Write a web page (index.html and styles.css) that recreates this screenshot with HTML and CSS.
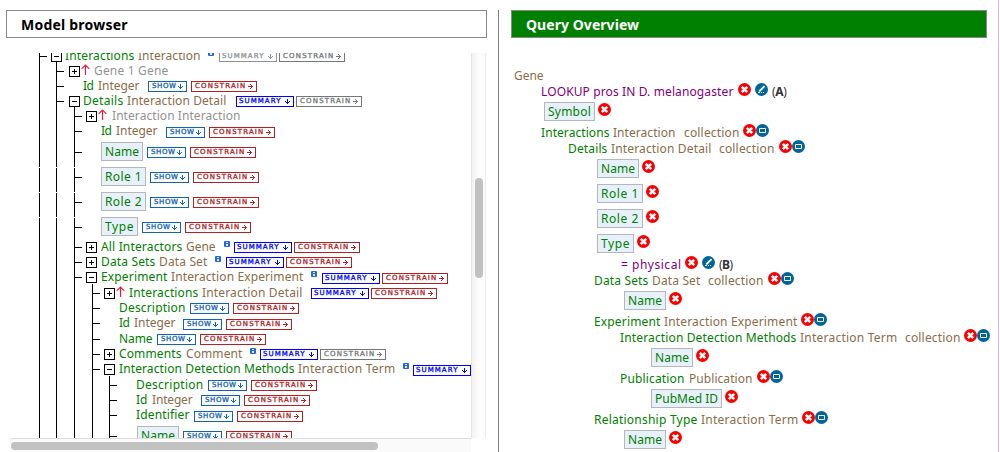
FILE: index.html
```html
<!DOCTYPE html>
<html lang="en">
<head>
<meta charset="utf-8">
<title>Query builder</title>
<link rel="stylesheet" href="styles.css">
</head>
<body>
<svg class="defs" aria-hidden="true">
  <symbol id="remove" viewBox="0 0 13 13"><circle cx="6.5" cy="6.5" r="6.5" fill="#fa0000"/><path d="M3.8 3.8l5.4 5.4M9.2 3.8l-5.4 5.4" stroke="#fff" stroke-width="2.5"/></symbol>
  <symbol id="edit" viewBox="0 0 13 13"><circle cx="6.5" cy="6.5" r="6.5" fill="#00659c"/><path d="M9.5 3.2L4.3 8.4" stroke="#fff" stroke-width="1.9"/><path d="M3 9.5h2M6 9.5h1M8 9.5h1" stroke="#fff"/></symbol>
  <symbol id="join" viewBox="0 0 13 13"><circle cx="6.5" cy="6.5" r="6.5" fill="#00659c"/><path d="M3.5 4.5h6v4h-6z" fill="none" stroke="#fff"/></symbol>
  <symbol id="up" viewBox="0 0 9 11"><path d="M4.5 11V1M.7 4.8L4.5 1l3.8 3.8" fill="none" stroke="#ff1030" stroke-width="1.1"/></symbol>
  <symbol id="info" viewBox="0 0 6 6"><rect width="6" height="6" rx="1" fill="#2468dc"/><path d="M2 1h2v1H2zM2 3h2v2H2z" fill="#fff" opacity=".85"/></symbol>
  <symbol id="down" viewBox="0 0 5 5"><path d="M2 0h1v5H2zM0 2h1v1H0zM4 2h1v1H4zM1 3h3v1H1z" fill="currentColor"/></symbol>
  <symbol id="right" viewBox="0 0 5 5"><path d="M0 2h5v1H0zM2 0h1v1H2zM2 4h1v1H2zM3 1h1v3H3z" fill="currentColor"/></symbol>
</svg>
<main class="page">
  <section class="model">
    <h2 class="title">Model browser</h2>
    <div class="viewer">
      <div class="tree" id="tree"></div>
      <div class="vbar"><div class="vthumb"></div></div>
      <div class="hbar"><div class="hthumb"></div></div>
    </div>
  </section>
  <section class="query">
    <h2 class="title title-green">Query Overview</h2>
    <div class="overview" id="overview"></div>
  </section>
</main>
<script src="app.js"></script>
</body>
</html>
```

FILE: styles.css
```css
body { margin: 0; background: #fff; font: 12px "Noto Sans", "Open Sans", sans-serif; overflow: hidden; }
.defs { display: none; }
.page { display: flex; height: 452px; box-sizing: border-box; padding-top: 10px; position: relative; }
.page::after { content: ""; position: absolute; top: 0; bottom: 0; left: 998px; width: 1px; background: #d3b9ea; }
.model { width: 498px; flex: none; box-sizing: border-box; padding-left: 6px; }
.query { width: 500px; flex: none; border-left: 1px solid #808080; box-sizing: border-box; padding-left: 12px; }
.title { margin: 0; box-sizing: border-box; height: 28px; width: 481px; border: 1px solid #888; padding-left: 14px; line-height: 27px; font-size: 14px; font-weight: bold; letter-spacing: .22px; color: #000; white-space: nowrap; }
.title-green { width: 476px; background: #008000; color: #fff; letter-spacing: .05px; }

.viewer { margin: 15px 0 0 4px; display: grid; grid-template: 385px 14px / 461px 15px; }
.tree { overflow: hidden; }
.vbar { box-sizing: border-box; border-left: 1px solid #e4e4e4; border-right: 1px solid #ececec; background: linear-gradient(90deg, #f2f2f2, #fefefe 60%, #fafafa); padding: 125px 0 0 3px; }
.vthumb { width: 8px; height: 100px; border-radius: 4px; background: #c1c1c1; }
.hbar { box-sizing: border-box; border-top: 1px solid #dedede; background: #fafafa; padding: 3px 0 0 1px; }
.hthumb { width: 367px; height: 8px; border-radius: 4px; background: #c1c1c1; }

.branch { list-style: none; margin: 0; padding: 0; border-left: 1px solid #000; position: relative; }
.tree > .branch { margin: -4px 0 0 29px; }
.branch .branch { margin-left: 17px; }
.branch .branch.near { margin-left: 16px; }
.branch .branch { padding-top: 2px; margin-top: -2px; }
.node { display: flex; align-items: flex-start; height: 15px; position: relative; width: 700px; }
.node.tall { height: 16px; }
.node.field { height: 25px; }
.node.last { height: 26px; }
.node.cut::after { content: ""; position: absolute; left: -40px; top: 3px; width: 45px; height: 1px; background: #fff; }
.tick { width: 7px; height: 1px; background: #000; margin-top: 7px; flex: none; }
.field > .tick { margin-top: 13px; }
.toggle { width: 11px; height: 11px; box-sizing: border-box; border: 1px solid #000; margin-top: 2px; flex: none; background: linear-gradient(#000, #000) center / 5px 1px no-repeat; }
.toggle.plus { background: linear-gradient(#000, #000) center / 5px 1px no-repeat, linear-gradient(#000, #000) center / 1px 5px no-repeat; }
.text { flex: none; white-space: pre; line-height: 14px; }
.green { color: #008000; }
.brown { color: #8b6c4a; }
.gray { color: #929292; }
.purple { color: #800080; }
.dark { color: #333; }
.chip { flex: none; box-sizing: border-box; height: 19px; border: 1px solid #b5b8bb; background: #e8f1fb; color: #008000; line-height: 17px; padding-left: 3px; white-space: pre; margin-top: 3px; }
.tag { flex: none; box-sizing: border-box; height: 11px; margin-top: 2px; border: 1px solid; background: #fcfeff; display: flex; align-items: center; justify-content: space-between; padding: 0 3px 0 3px; font: 7px/9px "DejaVu Sans", sans-serif; white-space: nowrap; }
.tag .label { -webkit-text-stroke: .3px currentColor; }
.field > .tag { margin-top: 8px; }
.tag.low { margin-top: 3px; }
.tag svg { width: 5px; height: 5px; flex: none; }
.show { color: #1464b4; width: 39px; }
.summary { color: #00f; width: 58px; padding-left: 2px; }
.constrain { color: #b22222; width: 66px; }
.off { color: #777; }
.faint { color: #939393; }
.arrow { width: 9px; height: 11px; flex: none; }
.info { width: 6px; height: 6px; margin-top: 1px; flex: none; }

.overview { margin-top: 30px; }
.line { display: flex; align-items: flex-start; height: 16px; }
.line .text { line-height: 15px; }
.line.field { height: 25px; }
.line .chip { margin-top: 2px; }
.icon { width: 13px; height: 13px; flex: none; margin-top: -1px; }
.field > .icon { margin-top: 3px; }
```

FILE: app.js
```js
const ctx = document.createElement('canvas').getContext('2d');

// Letter spacing that makes a text fill the given width.
function fit(el, text, width, font) {
  ctx.font = font;
  el.style.letterSpacing = ((width - ctx.measureText(text).width) / text.length).toFixed(3) + 'px';
}

function svg(id, cls) {
  const t = document.createElement('template');
  t.innerHTML = `<svg class="${cls}"><use href="#${id}"/></svg>`;
  return t.content.firstChild;
}

function div(cls, tag = 'span') {
  const e = document.createElement(tag);
  e.className = cls;
  return e;
}

const TAGS = {
  show: ['SHOW', 39, 24.5, 'down'],
  summary: ['SUMMARY', 58, 42.5, 'down'],
  constrain: ['CONSTRAIN', 66, 51.5, 'right'],
};
const SIZES = { arrow: 9, info: 6, remove: 13, edit: 13, join: 13 };

// Adds the items [kind, start, end, text] to a row whose content begins at x.
function fill(row, items, x) {
  for (const [kind, start, end, text] of items) {
    const name = kind.split(' ')[0];
    let el, width;
    if (TAGS[name]) {
      const [label, w, tw, dir] = TAGS[name];
      width = w;
      el = div('tag ' + kind);
      const s = div('label');
      s.textContent = label;
      s.style.width = tw + 'px';
      fit(s, label, tw, '7px "DejaVu Sans"');
      el.append(s, svg(dir, 'dir'));
    } else if (SIZES[name]) {
      width = SIZES[name];
      el = name === 'arrow' ? svg('up', 'arrow') : svg(name, name === 'info' ? 'info' : 'icon');
    } else {
      width = end - start;
      el = div(name === 'chip' ? 'chip' : 'text ' + kind);
      el.textContent = text;
      el.style.width = width + 'px';
      const bold = /bold/.test(kind);
      if (bold) el.innerHTML = text.replace(/\w/, '<b>$&</b>');
      fit(el, text, name === 'chip' ? width - 8 : width + 0.5, (bold ? 'bold ' : '') + '12px "Noto Sans"');
    }
    el.style.marginLeft = start - x + 'px';
    row.append(el);
    x = start + width;
  }
}

const show = (x, low = '') => [['show ' + low, x], ['constrain ' + low, x + 43]];
const sum = (x, low = '', a = '', b = '') => [[`summary ${low} ${a}`, x], [`constrain ${low} ${b}`, x + 60]];
const g = (a, b, t) => ['green', a, b, t];
const br = (a, b, t) => ['brown', a, b, t];
const gr = (a, b, t) => ['gray', a, b, t];
const chip = (a, b, t) => ['chip', a, b, t];

// Node: [row class, toggle sign, items, children]
const model = [
  ['', '-', [g(65, 134, 'Interactions'), br(138, 200, 'Interaction'), ['info', 208], ...sum(219, '', 'faint', 'off')], [
    ['', '+', [['arrow', 81], gr(94, 168, 'Gene 1 Gene')]],
    ['', '', [g(83, 93, 'Id'), br(98, 139, 'Integer'), ...show(148)]],
    ['', '-', [g(83, 123, 'Details'), br(127, 226, 'Interaction Detail'), ...sum(236, '', '', 'off')], [
      ['', '+', [['arrow', 98], gr(112, 240, 'Interaction Interaction')]],
      ['', '', [g(101, 111, 'Id'), br(116, 157, 'Integer'), ...show(166, 'low')]],
      ['field', '', [chip(101, 143, 'Name'), ...show(147)]],
      ['field cut', '', [chip(101, 146, 'Role 1'), ...show(150)]],
      ['field cut', '', [chip(101, 146, 'Role 2'), ...show(150)]],
      ['field last cut', '', [chip(101, 138, 'Type'), ...show(142)]],
      ['', '+', [g(101, 182, 'All Interactors'), br(186, 215, 'Gene'), ['info', 224], ...sum(234)]],
      ['', '+', [g(101, 155, 'Data Sets'), br(159, 207, 'Data Set'), ['info', 215], ...sum(226)]],
      ['tall', '-', [g(101, 167, 'Experiment'), br(171, 303, 'Interaction Experiment'), ['info', 311], ...sum(322, 'low')], [
        ['', '+', [['arrow', 116], g(129, 198, 'Interactions'), br(202, 302, 'Interaction Detail'), ...sum(311)]],
        ['', '', [g(119, 185, 'Description'), ...show(190)]],
        ['tall', '', [g(119, 129, 'Id'), br(134, 175, 'Integer'), ...show(183, 'low')]],
        ['', '', [g(119, 152, 'Name'), ...show(157)]],
        ['', '+', [g(119, 181, 'Comments'), br(186, 242, 'Comment'), ['info', 250], ...sum(260, '', '', 'off')]],
        ['tall', '-', [g(119, 294, 'Interaction Detection Methods'), br(298, 395, 'Interaction Term'), ['info', 403], ...sum(413, 'low').slice(0, 1)], [
          ['', '', [g(136, 203, 'Description'), ...show(208)]],
          ['', '', [g(136, 147, 'Id'), br(152, 192, 'Integer'), ...show(201)]],
          ['', '', [g(136, 189, 'Identifier'), ...show(194, 'low')]],
          ['field', '', [chip(137, 179, 'Name'), ...show(183)]],
        ]],
      ]],
    ]],
  ]],
];
const GUIDES = [39, 56, 74, 92, 109];

function branch(nodes, depth) {
  const ul = div('branch' + (depth === 1 || depth === 4 ? ' near' : ''), 'ul');
  for (const [cls, sign, items, children] of nodes) {
    const li = document.createElement('li');
    const row = div('node ' + cls, 'div');
    let x = GUIDES[depth] + 1;
    row.append(div('tick'));
    x += 7;
    if (sign) {
      const t = div('toggle ' + (sign === '+' ? 'plus' : 'minus'));
      const at = [51, 69, 86, 104][depth];
      t.style.marginLeft = at - x + 'px';
      row.append(t);
      x = at + 11;
    }
    fill(row, items, x);
    li.append(row);
    if (children) li.append(branch(children, depth + 1));
    ul.append(li);
  }
  return ul;
}
document.getElementById('tree').append(branch(model, 0));

const rj = x => [['remove', x], ['join', x + 13]];
const query = [
  ['', [br(514, 543, 'Gene')]],
  ['', [['purple', 541, 733, 'LOOKUP pros IN D. melanogaster'], ['remove', 738], ['edit', 755], ['dark bold', 772, 787, '(A)']]],
  ['field', [chip(544, 595, 'Symbol'), ['remove', 598]]],
  ['', [g(541, 609, 'Interactions'), br(613, 675, 'Interaction'), br(684, 739, 'collection'), ...rj(743)]],
  ['', [g(568, 607, 'Details'), br(611, 711, 'Interaction Detail'), br(719, 774, 'collection'), ...rj(779)]],
  ['field', [chip(597, 639, 'Name'), ['remove', 642]]],
  ['field', [chip(597, 643, 'Role 1'), ['remove', 646]]],
  ['field', [chip(597, 643, 'Role 2'), ['remove', 646]]],
  ['field', [chip(597, 634, 'Type'), ['remove', 637]]],
  ['', [['purple', 621, 681, '= physical'], ['remove', 685], ['edit', 702], ['dark bold', 719, 733, '(B)']]],
  ['', [g(594, 648, 'Data Sets'), br(652, 700, 'Data Set'), br(708, 763, 'collection'), ...rj(768)]],
  ['field', [chip(624, 666, 'Name'), ['remove', 669]]],
  ['', [g(594, 660, 'Experiment'), br(664, 797, 'Interaction Experiment'), ...rj(801)]],
  ['', [g(620, 796, 'Interaction Detection Methods'), br(800, 897, 'Interaction Term'), br(905, 960, 'collection'), ...rj(964)]],
  ['field', [chip(651, 693, 'Name'), ['remove', 696]]],
  ['', [g(620, 684, 'Publication'), br(689, 752, 'Publication'), ...rj(757)]],
  ['field', [chip(651, 722, 'PubMed ID'), ['remove', 725]]],
  ['', [g(594, 697, 'Relationship Type'), br(701, 798, 'Interaction Term'), ...rj(802)]],
  ['field', [chip(624, 666, 'Name'), ['remove', 669]]],
];
for (const [cls, items] of query) {
  const row = div('line ' + cls, 'div');
  fill(row, items, 511);
  document.getElementById('overview').append(row);
}
```
